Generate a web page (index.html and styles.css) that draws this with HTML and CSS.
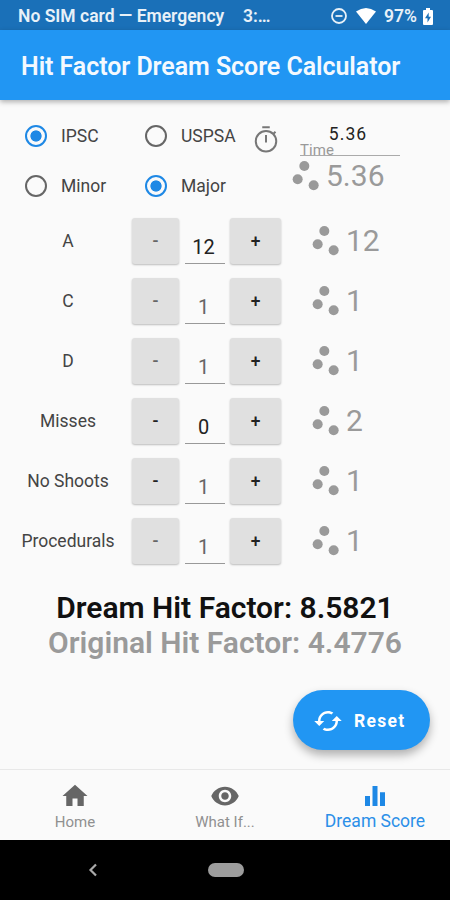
FILE: index.html
```html
<!DOCTYPE html>
<html lang="en">
<head>
  <meta charset="UTF-8" />
  <title>Hit Factor Dream Score Calculator</title>
  <link rel="stylesheet" href="styles.css">
</head>
<body>

<!-- shared icons -->
<svg class="sprite">
  <symbol id="scatter" viewBox="0 0 24 24">
    <circle cx="7" cy="14" r="3"/><circle cx="11" cy="6" r="3"/><circle cx="16.6" cy="17.6" r="3"/>
  </symbol>
</svg>

<div class="status-bar">
  <span class="carrier">No SIM card — Emergency</span>
  <span class="clock">3:…</span>
  <svg class="dnd" viewBox="0 0 16 16"><circle cx="8" cy="8" r="7"/><path d="M4.5 8h7"/></svg>
  <svg class="wifi" viewBox="0 0 20 16"><path d="M0 3.5Q10-3.500 20 3.500L10 16z"/></svg>
  <span class="percent">97%</span>
  <svg class="battery" viewBox="0 0 10 17"><path class="cell" d="M3 0h4v2h2q1 0 1 1v13q0 1-1 1H1q-1 0-1-1V3q0-1 1-1h2z"/><path class="bolt" d="M5.700 4.500L2 10.300h2.500v4.200L8 8.700H5.700z"/></svg>
</div>

<header class="app-bar">
  <h1>Hit Factor Dream Score Calculator</h1>
</header>

<main class="content">
  <div class="options">
    <div class="radios">
      <label class="radio"><span class="dot on"></span>IPSC</label>
      <label class="radio"><span class="dot"></span>USPSA</label>
      <label class="radio"><span class="dot"></span>Minor</label>
      <label class="radio"><span class="dot on"></span>Major</label>
    </div>
    <svg class="timer" viewBox="0 0 24 24"><path d="M9 1.800h6M12 8v6M18 7l1.600-1.600"/><circle cx="12" cy="13" r="8.200"/></svg>
    <div class="time">
      <div class="time-field">
        <span class="time-value">5.36</span>
        <span class="time-label">Time</span>
      </div>
      <div class="dream"><svg><use href="#scatter"/></svg>5.36</div>
    </div>
  </div>

  <div class="row">
    <span class="name">A</span>
    <button class="btn minus soft">-</button><span class="count">12</span><button class="btn plus">+</button>
    <div class="dream"><svg><use href="#scatter"/></svg>12</div>
  </div>
  <div class="row">
    <span class="name">C</span>
    <button class="btn minus soft">-</button><span class="count soft">1</span><button class="btn plus">+</button>
    <div class="dream"><svg><use href="#scatter"/></svg>1</div>
  </div>
  <div class="row">
    <span class="name">D</span>
    <button class="btn minus soft">-</button><span class="count soft">1</span><button class="btn plus">+</button>
    <div class="dream"><svg><use href="#scatter"/></svg>1</div>
  </div>
  <div class="row">
    <span class="name">Misses</span>
    <button class="btn minus">-</button><span class="count">0</span><button class="btn plus">+</button>
    <div class="dream"><svg><use href="#scatter"/></svg>2</div>
  </div>
  <div class="row">
    <span class="name">No Shoots</span>
    <button class="btn minus">-</button><span class="count soft">1</span><button class="btn plus">+</button>
    <div class="dream"><svg><use href="#scatter"/></svg>1</div>
  </div>
  <div class="row">
    <span class="name">Procedurals</span>
    <button class="btn minus soft">-</button><span class="count soft">1</span><button class="btn plus">+</button>
    <div class="dream"><svg><use href="#scatter"/></svg>1</div>
  </div>

  <div class="result">
    <div class="result-dream">Dream Hit Factor: 8.5821</div>
    <div class="result-original">Original Hit Factor: 4.4776</div>
  </div>

  <button class="reset">
    <svg viewBox="0 0 24 24"><path d="M19 8l-4 4h3c0 3.310-2.690 6-6 6-1.010 0-1.970-.25-2.800-.7l-1.460 1.460C8.970 19.540 10.430 20 12 20c4.420 0 8-3.580 8-8h3l-4-4zM6 12c0-3.310 2.690-6 6-6 1.010 0 1.970.25 2.800.7l1.460-1.460C15.030 4.460 13.570 4 12 4c-4.420 0-8 3.580-8 8H1l4 4 4-4H6z"/></svg>
    <span>Reset</span>
  </button>
</main>

<nav class="tabs">
  <div class="tab">
    <svg viewBox="0 0 24 24"><path d="M10 20v-6h4v6h5v-8h3L12 3 2 12h3v8z"/></svg>
    <span>Home</span>
  </div>
  <div class="tab">
    <svg viewBox="0 0 24 24"><path d="M12 4.500C7 4.500 2.730 7.610 1 12c1.730 4.390 6 7.500 11 7.500s9.270-3.110 11-7.500c-1.730-4.390-6-7.500-11-7.500zM12 17c-2.760 0-5-2.240-5-5s2.240-5 5-5 5 2.240 5 5-2.240 5-5 5zm0-8c-1.660 0-3 1.340-3 3s1.340 3 3 3 3-1.340 3-3-1.340-3-3-3z"/></svg>
    <span>What If...</span>
  </div>
  <div class="tab active">
    <svg viewBox="0 0 24 24"><path d="M10 20h4V4h-4v16zm-6 0h4v-8H4v8zM16 9v11h4V9h-4z"/></svg>
    <span>Dream Score</span>
  </div>
</nav>

<div class="system-bar">
  <svg class="back" viewBox="0 0 10 14"><path d="M8 1.500L2.500 7 8 12.500"/></svg>
  <span class="pill"></span>
</div>

</body>
</html>
```
FILE: styles.css
```css
* {
  box-sizing: border-box;
}
body {
  margin: 0;
  width: 450px;
  height: 900px;
  display: flex;
  flex-direction: column;
  overflow: hidden;
  font-family: Roboto, sans-serif;
  font-size: 17.5px;
  color: #444;
  background-color: #fafafa;
}
button {
  font-family: inherit;
  border: none;
  padding: 0;
}
.sprite {
  display: none;
}

/* top bars */
.status-bar {
  height: 30px;
  flex: none;
  display: flex;
  align-items: center;
  padding: 2px 17px 0 18px;
  background-color: #1a70b8;
  color: #e8f1f8;
  font-weight: 600;
  white-space: nowrap;
}
.carrier {
  width: 225px;
}
.clock {
  width: 88px;
}
.dnd {
  width: 16px;
  height: 16px;
  fill: none;
  stroke: #e8f1f8;
  stroke-width: 1.8;
}
.wifi {
  width: 20px;
  height: 16px;
  margin-left: 9px;
  fill: #fff;
}
.percent {
  width: 34px;
  margin-left: 8px;
}
.battery {
  width: 10px;
  height: 17px;
  margin-left: 5px;
}
.cell {
  fill: #fff;
}
.bolt {
  fill: #1a70b8;
}
.app-bar {
  height: 70px;
  flex: none;
  display: flex;
  align-items: center;
  padding: 2px 0 0 21px;
  background-color: #2196f3;
  box-shadow: 0 2px 5px rgba(0,0,0,0.3);
}
h1 {
  margin: 0;
  color: #f4f9fe;
  font-size: 25px;
  font-weight: 600;
  letter-spacing: -0.06px;
  white-space: nowrap;
}

/* division, power factor and time */
.content {
  height: 669px;
  flex: none;
  display: flex;
  flex-direction: column;
  padding-top: 10px;
}
.options {
  height: 101px;
  display: flex;
}
.radios {
  width: 250px;
  padding: 1px 0 0 25px;
  display: grid;
  grid-template-columns: 120px 105px;
  grid-template-rows: 50px 50px;
  align-items: center;
}
.radio {
  display: flex;
  align-items: center;
  gap: 14px;
}
.dot {
  width: 22px;
  height: 22px;
  border: 2.5px solid #666;
  border-radius: 50%;
}
.dot.on {
  border-color: #1e88e5;
  background: radial-gradient(circle, #1e88e5 5.2px, transparent 6px);
}
.timer {
  width: 30px;
  height: 30px;
  margin: 15px 0 0 1px;
  fill: none;
  stroke: #777;
  stroke-width: 1.6;
}
.time {
  padding: 12px 0 0 5px;
}
.time-field {
  width: 100px;
  height: 34px;
  margin-left: 14px;
  display: flex;
  flex-direction: column;
  border-bottom: 1px solid #aaa;
}
.time-value {
  line-height: 24px;
  text-align: center;
  padding-right: 4px;
  letter-spacing: 1.1px;
  color: #222;
}
.time-label {
  font-size: 15px;
  line-height: 9px;
  letter-spacing: 0.1px;
  color: #999;
}
.dream {
  height: 40px;
  display: flex;
  align-items: center;
  font-size: 30px;
  line-height: 40px;
  color: #9a9a9a;
}
.dream svg {
  width: 40px;
  height: 40px;
  fill: #9a9a9a;
}

/* score rows */
.row {
  height: 60px;
  flex: none;
  display: flex;
  align-items: center;
}
.name {
  width: 132px;
  padding-left: 4px;
  text-align: center;
}
.btn {
  height: 46px;
  border-radius: 3px;
  background-color: #e0e0e0;
  box-shadow: 0 1px 2px rgba(0,0,0,0.25);
  color: #222;
  font-size: 17.5px;
  font-weight: 500;
}
.minus {
  width: 47px;
}
.plus {
  width: 51px;
}
.count {
  width: 40px;
  height: 34px;
  margin: 12px 5px 0 6px;
  padding-right: 3px;
  border-bottom: 1px solid #999;
  text-align: center;
  font-size: 20px;
  line-height: 35px;
  color: #222;
}
.soft {
  color: #666;
}
.row .dream {
  margin-left: 25px;
}

/* totals */
.result {
  margin-top: 19px;
  text-align: center;
  font-size: 30px;
  font-weight: 600;
  line-height: 35px;
}
.result-dream {
  color: #111;
}
.result-original {
  color: #9a9a9a;
}
.reset {
  width: 137px;
  height: 60px;
  flex: none;
  margin: 30px 20px 0 auto;
  padding: 1px 0 0 20px;
  display: flex;
  align-items: center;
  gap: 11px;
  border-radius: 30px;
  background-color: #2196f3;
  box-shadow: 0 5px 10px rgba(0,0,0,0.3);
  color: #fff;
  font-size: 17.5px;
  font-weight: 700;
  letter-spacing: 1.3px;
}
.reset svg {
  width: 30px;
  height: 30px;
  fill: #fff;
}

/* bottom bars */
.tabs {
  height: 71px;
  flex: none;
  display: flex;
  border-top: 1px solid #e8e8e8;
}
.tab {
  width: 150px;
  padding-top: 11px;
  display: flex;
  flex-direction: column;
  align-items: center;
  font-size: 15px;
  line-height: 23px;
  color: #909090;
}
.tab svg {
  width: 30px;
  height: 30px;
  fill: #666;
}
.tab.active {
  color: #2b8fe8;
  font-size: 17.5px;
  line-height: 20px;
}
.tab.active svg {
  fill: #1e88e5;
}
.system-bar {
  height: 60px;
  flex: none;
  display: flex;
  align-items: center;
  padding-left: 88px;
  background-color: #000;
}
.back {
  width: 10px;
  height: 14px;
  fill: none;
  stroke: #aaa;
  stroke-width: 2.2;
}
.pill {
  width: 36px;
  height: 14px;
  margin-left: 110px;
  border-radius: 7px;
  background-color: #9c9c9c;
}
```
